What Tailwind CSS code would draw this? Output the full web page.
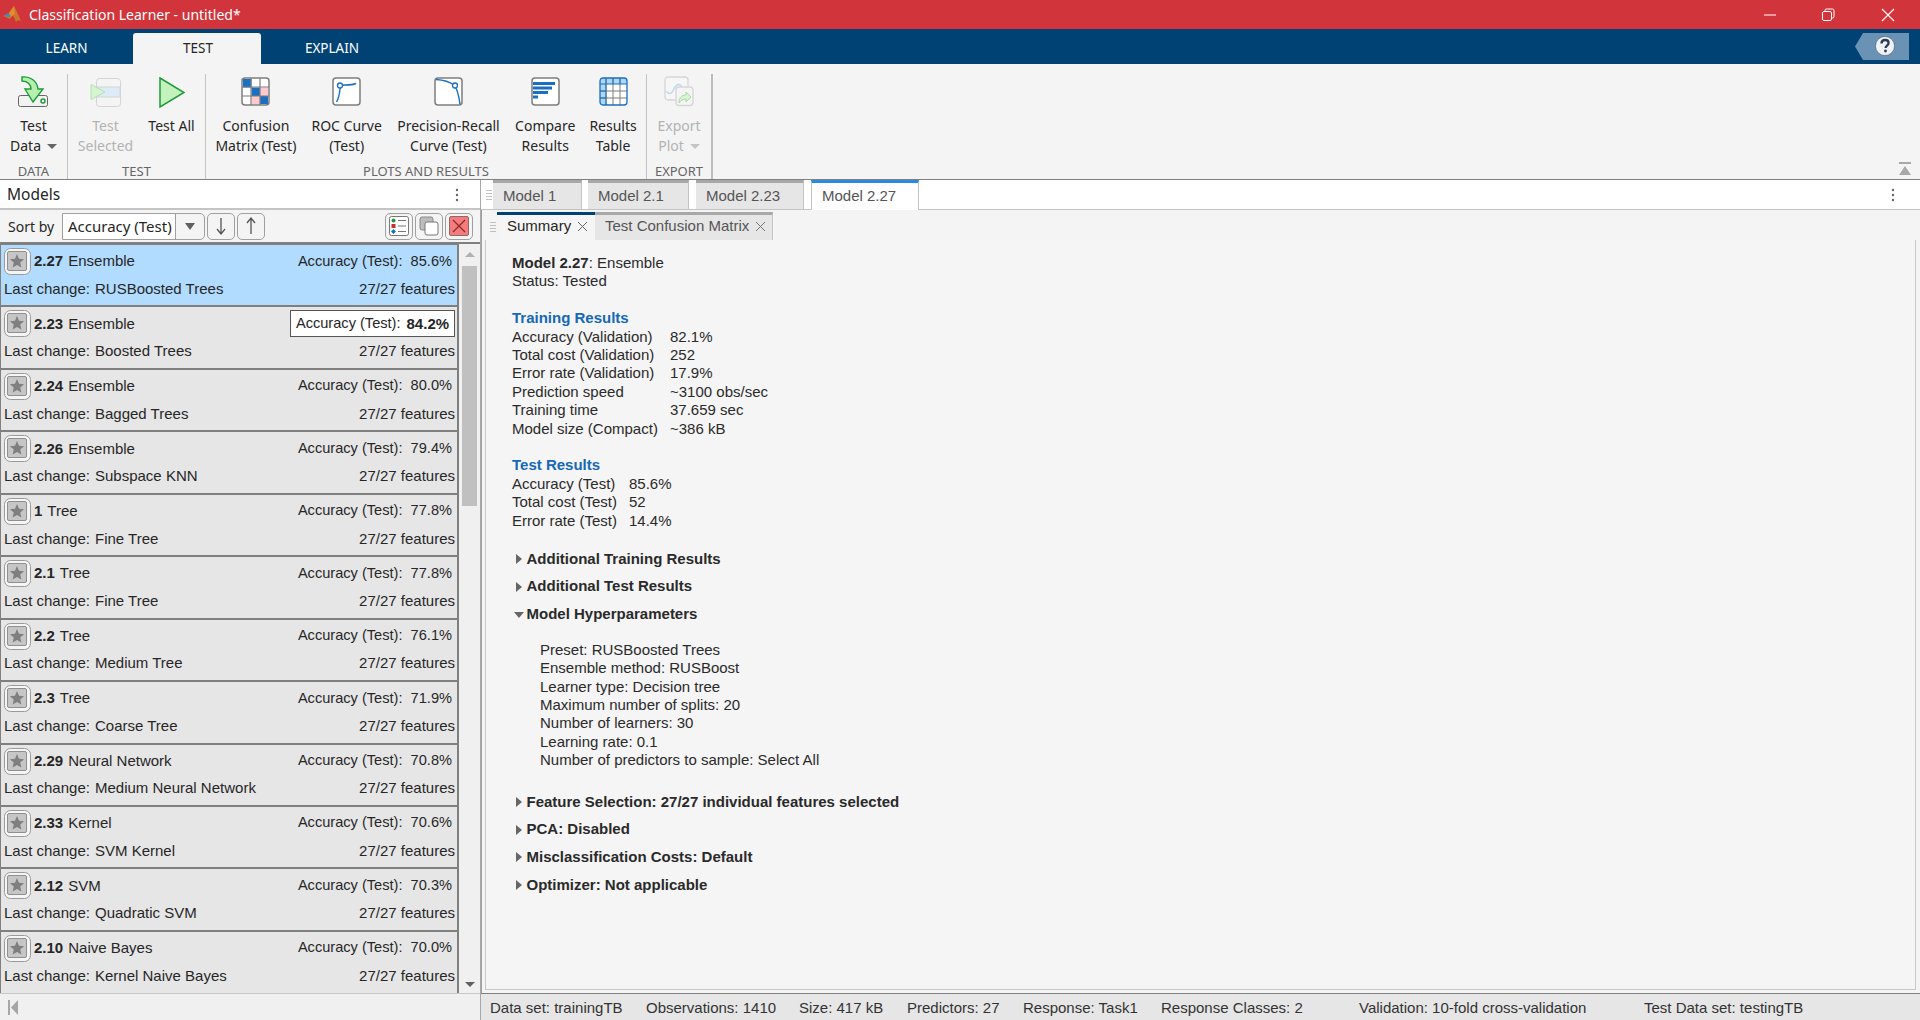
<!DOCTYPE html>
<html><head><meta charset="utf-8"><title>Classification Learner</title>
<script src="https://cdn.jsdelivr.net/npm/@tailwindcss/browser@4"></script></head>
<body class="m-0 h-[1020px] w-[1920px] overflow-hidden bg-[#f4f4f4] font-['Liberation_Sans',sans-serif] text-[#262626]">
<svg class="hidden"><defs><symbol id="star" viewBox="0 0 27 27">
<rect x="0.5" y="0.5" width="26" height="26" rx="6" fill="#f5f5f5" stroke="#9a9a9a"/><rect x="3.5" y="3.5" width="19" height="19" rx="1.5" fill="#c6c6c6" stroke="#8f8f8f"/><path d="M13 6l2 4.800 5.100.4-3.900 3.400 1.200 5-4.400-2.700-4.400 2.700 1.200-5-3.900-3.400 5.100-.4z" fill="#7f7f7f"/></symbol></defs></svg>

<div class="h-[29px] bg-[#d1343b] flex items-center font-['Noto_Sans',sans-serif] text-white text-[14px] relative">
 <svg class="ml-[3px] w-[20px] h-[20px]" viewBox="0 0 20 20"><path d="M0 11l6-3 5-7 3 6 4 9-3-1-2 2-3-7-3 4z" fill="#c9772a"/><path d="M0 11l6-3 2 3-2 1z" fill="#4a86b8"/><path d="M6 8l5-7 1 8-4 3z" fill="#e58a2e"/></svg>
 <span class="ml-[6px]">Classification Learner - untitled*</span>
 <div class="ml-auto flex items-center">
  <svg class="w-[14px] h-[14px] mr-[44px]" viewBox="0 0 14 14"><path d="M1 7h12" stroke="#fff"/></svg>
  <svg class="w-[14px] h-[14px] mr-[46px]" viewBox="0 0 14 14" fill="none" stroke="#fff"><rect x="1.5" y="3.5" width="9" height="9" rx="1.5"/><path d="M4 3V2.5a1.5 1.5 0 011.5-1.5h6A1.5 1.5 0 0113 2.5v6a1.5 1.5 0 01-1.5 1.5H11"/></svg>
  <svg class="w-[14px] h-[14px] mr-[25px]" viewBox="0 0 14 14"><path d="M1 1l12 12M13 1L1 13" stroke="#fff" stroke-width="1.1"/></svg>
 </div>
</div>

<div class="h-[35px] bg-[#004274] flex items-end relative font-['Noto_Sans',sans-serif] text-[13.5px] text-white">
 <div class="w-[133px] h-[31px] flex items-center justify-center">LEARN</div>
 <div class="w-[128px] h-[31px] flex items-center justify-center bg-[#f4f4f4] text-[#262626] rounded-t-[3px] pl-[2px]">TEST</div>
 <div class="w-[140px] h-[31px] flex items-center justify-center pl-[2px]">EXPLAIN</div>
 <svg class="absolute left-[1855px] top-[4px] w-[54px] h-[27px]" viewBox="0 0 54 27"><path d="M0 13.5L8 0h46v27H8z" fill="#6a92b5"/><circle cx="30" cy="13" r="9.5" fill="#eef1f5"/><circle cx="30" cy="13" r="9.5" fill="none" stroke="#2f3f55" stroke-opacity=".45"/><path d="M26.5 10.5c0-2.200 1.500-3.500 3.600-3.500s3.500 1.200 3.500 3c0 2.700-3 2.500-3 5" fill="none" stroke="#2b3a55" stroke-width="2.300"/><circle cx="30.500" cy="18" r="1.400" fill="#2b3a55"/></svg>
</div>

<div class="h-[115px] bg-[#f4f4f4] flex relative font-['Noto_Sans',sans-serif] text-[14px] leading-[20px] pt-[10px]">
 <div class="w-[68px] shrink-0 border-r border-[#c4c4c4] flex flex-col items-center">
  <svg class="w-[34px] h-[36px]" viewBox="0 0 34 36"><rect x="1.500" y="21.500" width="29" height="11" rx="2" fill="#f2f2f2" stroke="#666"/><circle cx="26" cy="27" r="2" fill="#fff" stroke="#1f9a3a" stroke-width="1.500"/><path d="M5 3C12 2 20 6 21 15h5L16 28 8 15h6C14 11 11 7 5 7z" fill="#b6f0ae" stroke="#1f9a3a" stroke-width="1.400"/></svg>
  <div class="mt-[6px] text-center">Test</div>
  <div class="flex items-center gap-[6px]">Data <span class="w-0 h-0 border-l-[5px] border-r-[5px] border-t-[5px] border-l-transparent border-r-transparent border-t-[#666]"></span></div>
  <div class="mt-auto h-[16px] text-[13px] leading-[16px] text-[#666]">DATA</div>
 </div>
 <div class="w-[138px] shrink-0 border-r border-[#c4c4c4] flex flex-col">
  <div class="flex flex-1">
   <div class="w-[75px] flex flex-col items-center text-[#b3b3b3]">
    <svg class="mt-[3px] w-[32px] h-[31px]" viewBox="0 0 32 31"><rect x="6.500" y="1.500" width="24" height="28" rx="3" fill="#f4f4f4" stroke="#d4d4d4"/><rect x="7" y="10" width="23" height="10" fill="#dcebf7" stroke="#d4d4d4"/><path d="M1 7.500L15 15 1 22.500z" fill="#d6f4d2" stroke="#b5e2b0"/></svg>
    <div class="mt-[8px]">Test</div><div>Selected</div>
   </div>
   <div class="w-[57px] flex flex-col items-center">
    <svg class="mt-[3px] w-[26px] h-[31px]" viewBox="0 0 26 31"><path d="M1 1l24 14.500L1 30z" fill="#c4f2bd" stroke="#1f9a3a" stroke-width="1.500"/></svg>
    <div class="mt-[8px] whitespace-nowrap">Test All</div>
   </div>
  </div>
  <div class="h-[16px] text-center text-[13px] leading-[16px] text-[#666]">TEST</div>
 </div>
 <div class="w-[441px] shrink-0 border-r border-[#c4c4c4] flex flex-col">
  <div class="flex flex-1 text-center">
   <div class="w-[100px] flex flex-col items-center">
    <svg class="mt-[3px] w-[29px] h-[29px]" viewBox="0 0 29 29"><rect x="1" y="1" width="27" height="27" rx="3" fill="#fff"/><path d="M2 2h8.500v8.500H2zM10.500 10.500h8.500V19h-8.500zM19 19h8v8h-8z" fill="#1a6fc0"/><path d="M19 10.500h8V19h-8zM10.500 19H19v8h-8.500z" fill="#fcc9cc"/><path d="M10 1v27M19 1v27M1 10h27M1 19h27" stroke="#7d7d7d" stroke-width="1.200"/><rect x="1" y="1" width="27" height="27" rx="3" fill="none" stroke="#7d7d7d" stroke-width="1.500"/></svg>
    <div class="mt-[10px]">Confusion</div><div class="whitespace-nowrap">Matrix (Test)</div>
   </div>
   <div class="ml-[1px] w-[80px] flex flex-col items-center">
    <svg class="mt-[3px] w-[29px] h-[29px]" viewBox="0 0 29 29"><rect x="1" y="1" width="27" height="27" rx="3" fill="#fff" stroke="#7d7d7d" stroke-width="1.500"/><path d="M4.500 25c2.500-4 3-8 3.500-13 .3-2 2-4 5-4s8 0 11-1.500" fill="none" stroke="#1a6fc0" stroke-width="1.400"/><circle cx="8" cy="8.500" r="2.500" fill="#fff" stroke="#1a6fc0" stroke-width="1.300"/></svg>
    <div class="mt-[10px] whitespace-nowrap">ROC Curve</div><div>(Test)</div>
   </div>
   <div class="w-[124px] flex flex-col items-center">
    <svg class="mt-[3px] w-[29px] h-[29px]" viewBox="0 0 29 29"><rect x="1" y="1" width="27" height="27" rx="3" fill="#fff" stroke="#7d7d7d" stroke-width="1.500"/><path d="M2 2.500C10 3 16 5 20 8c3 3 5 12 6 19" fill="none" stroke="#1a6fc0" stroke-width="1.400"/><circle cx="21" cy="8.500" r="2.500" fill="#fff" stroke="#1a6fc0" stroke-width="1.300"/></svg>
    <div class="mt-[10px] whitespace-nowrap">Precision-Recall</div><div class="whitespace-nowrap">Curve (Test)</div>
   </div>
   <div class="w-[70px] flex flex-col items-center">
    <svg class="mt-[3px] w-[29px] h-[29px]" viewBox="0 0 29 29"><rect x="1" y="1" width="27" height="27" rx="3" fill="#fff" stroke="#7d7d7d" stroke-width="1.500"/><path d="M2 5h22v3H2zM2 9.500h19v3H2zM2 14h15v3H2zM2 18.500h5v3H2z" fill="#1a6fc0"/></svg>
    <div class="mt-[10px]">Compare</div><div>Results</div>
   </div>
   <div class="w-[66px] flex flex-col items-center">
    <svg class="mt-[3px] w-[29px] h-[29px]" viewBox="0 0 29 29"><rect x="1" y="1" width="27" height="27" rx="3" fill="#fff"/><path d="M1 1h27v6H1zM1 7h6v21H1z" fill="#aed6f7"/><path d="M7 1v27M14 1v27M21 1v27M1 14h27M1 21h27" stroke="#7d7d7d"/><path d="M7 1v27M14 1v6M21 1v6M1 7h27M1 14h6M1 21h6" stroke="#1a6fc0"/><rect x="1" y="1" width="27" height="27" rx="3" fill="none" stroke="#1a6fc0" stroke-width="1.300"/></svg>
    <div class="mt-[10px]">Results</div><div>Table</div>
   </div>
  </div>
  <div class="h-[16px] text-center text-[13px] leading-[16px] text-[#666]">PLOTS AND RESULTS</div>
 </div>
 <div class="w-[66px] shrink-0 border-r-2 border-[#bcbcbc] flex flex-col items-center">
  <svg class="mt-[2px] w-[30px] h-[31px]" viewBox="0 0 30 31"><rect x="1" y="1" width="23" height="23" rx="3" fill="#f6f6f6" stroke="#d6d6d6" stroke-width="1.300"/><path d="M2 15c3 4 6 3 8-2s6-6 8-2" fill="none" stroke="#bcd7ef" stroke-width="1.300"/><rect x="12" y="11" width="17" height="18.500" rx="3" fill="#f4f4f4" stroke="#d6d6d6" stroke-width="1.300"/><path d="M15 27c0-5 2-8 7-8v-3l5 5-5 5v-3c-3 0-5 1-7 4z" fill="#d9f3d4" stroke="#a9dca2"/></svg>
  <div class="mt-[9px] text-[#b3b3b3]">Export</div>
  <div class="flex items-center gap-[6px] text-[#b3b3b3]">Plot <span class="w-0 h-0 border-l-[5px] border-r-[5px] border-t-[5px] border-l-transparent border-r-transparent border-t-[#c4c4c4]"></span></div>
  <div class="mt-auto h-[16px] text-[13px] leading-[16px] text-[#666]">EXPORT</div>
 </div>
 <svg class="absolute left-[1898px] top-[98px] w-[14px] h-[14px]" viewBox="0 0 14 14"><path d="M1 1h12" stroke="#a8a8a8" stroke-width="2"/><path d="M7 4l6 9H1z" fill="#a8a8a8"/></svg>
</div>

<div class="h-[841px] flex border-t border-[#808080]">
 <div class="w-[481px] shrink-0 border-r border-[#a8a8a8] flex flex-col">
  <div class="h-[30px] shrink-0 bg-white flex items-center justify-between border-b-[2px] border-[#c4c4c4] pl-[7px] pr-[8px] pt-[1px] text-[15.500px] font-['Noto_Sans',sans-serif]">
   <span>Models</span>
   <svg class="w-[4px] h-[14px] mr-[13px]" viewBox="0 0 4 14" fill="#666"><circle cx="2" cy="2" r="1.200"/><circle cx="2" cy="7" r="1.200"/><circle cx="2" cy="12" r="1.200"/></svg>
  </div>
  <div class="h-[34px] shrink-0 bg-[#f4f4f4] flex items-center border-b-2 border-[#808080] text-[15px] pl-[8px]">
   <span class="w-[54px] font-['Noto_Sans',sans-serif] text-[14px]">Sort by</span>
   <div class="w-[143px] h-[27px] flex border border-[#a0a0a0] rounded-r-[5px]">
    <div class="w-[113px] bg-white flex items-center pl-[5px] whitespace-nowrap border-r border-[#a0a0a0] font-['Noto_Sans',sans-serif] text-[15px]">Accuracy (Test)</div>
    <div class="flex-1 flex items-center justify-center"><span class="w-0 h-0 border-l-[5px] border-r-[5px] border-t-[7px] border-l-transparent border-r-transparent border-t-[#606060]"></span></div>
   </div>
   <div class="ml-[2px] w-[28px] h-[27px] border border-[#a0a0a0] rounded-[5px] flex items-center justify-center"><svg class="w-[12px] h-[18px]" viewBox="0 0 12 18" fill="none" stroke="#555" stroke-width="1.300"><path d="M6 1v15M2 12l4 5 4-5"/></svg></div>
   <div class="ml-[2px] w-[28px] h-[27px] border border-[#a0a0a0] rounded-[5px] flex items-center justify-center"><svg class="w-[12px] h-[18px]" viewBox="0 0 12 18" fill="none" stroke="#555" stroke-width="1.300"><path d="M6 17V2M2 6l4-5 4 5"/></svg></div>
   <div class="ml-[120px] w-[28px] h-[27px] border border-[#a0a0a0] rounded-[5px] flex items-center justify-center"><svg class="w-[20px] h-[20px]" viewBox="0 0 20 20"><rect x=".5" y=".5" width="19" height="19" rx="2" fill="#fff" stroke="#777"/><path d="M9 4.500h8M9 10h8M9 15.500h8" stroke="#777"/><circle cx="4.500" cy="4.500" r="2" fill="#1f9a3a"/><rect x="2.500" y="8" width="4" height="4" fill="#c8302f"/><path d="M4.500 13l2.500 2.500L4.500 18 2 15.500z" fill="#1a6fc0"/></svg></div>
   <div class="ml-[2px] w-[28px] h-[27px] border border-[#a0a0a0] rounded-[5px] flex items-center justify-center"><svg class="w-[20px] h-[20px]" viewBox="0 0 20 20"><rect x="1" y="1" width="13" height="13" rx="2" fill="#bdbdbd" stroke="#8a8a8a"/><rect x="6" y="6" width="13" height="13" rx="2" fill="#fff" stroke="#777"/></svg></div>
   <div class="ml-[2px] w-[28px] h-[27px] border border-[#a0a0a0] rounded-[5px] flex items-center justify-center"><svg class="w-[20px] h-[20px]" viewBox="0 0 20 20"><rect x=".5" y=".5" width="19" height="19" rx="1.500" fill="#f47c7c" stroke="#8a6a6a"/><path d="M4 4l12 12M16 4L4 16" stroke="#8c2a2a" stroke-width="1.200"/></svg></div>
  </div>
  <div class="flex-1 min-h-0 flex">
   <div class="w-[459px] shrink-0 overflow-hidden border-l border-r-2 border-[#808080] pt-[1px] bg-[#808080] text-[15px]">

    <div class="h-[62.45px] box-border border-b-2 border-[#7f7f7f] bg-[#b1dcff] pt-[3px]"><div class="flex items-center h-[27px] pl-[3px] pr-[5px]"><svg class="w-[27px] h-[27px] mr-[3px]"><use href="#star"/></svg><b>2.27</b><span class="ml-[5px]">Ensemble</span><span class="ml-auto text-[14.600px]">Accuracy (Test):&nbsp; 85.6%</span></div><div class="flex justify-between pl-[3px] pr-[2px] mt-[4px] h-[20px] items-center"><span><span class="inline-block w-[91px]">Last change:</span>RUSBoosted Trees</span><span>27/27 features</span></div></div>

    <div class="h-[62.45px] box-border border-b-2 border-[#7f7f7f] bg-[#e6e6e6] pt-[3px]"><div class="flex items-center h-[27px] pl-[3px] pr-[2px]"><svg class="w-[27px] h-[27px] mr-[3px]"><use href="#star"/></svg><b>2.23</b><span class="ml-[5px]">Ensemble</span><span class="ml-auto w-[165px] h-[27px] bg-white border border-[#555] flex items-center justify-center text-[14.600px]">Accuracy (Test):<b class="ml-[6px] text-[15px]">84.2%</b></span></div><div class="flex justify-between pl-[3px] pr-[2px] mt-[4px] h-[20px] items-center"><span><span class="inline-block w-[91px]">Last change:</span>Boosted Trees</span><span>27/27 features</span></div></div>

    <div class="h-[62.45px] box-border border-b-2 border-[#7f7f7f] bg-[#e6e6e6] pt-[3px]"><div class="flex items-center h-[27px] pl-[3px] pr-[5px]"><svg class="w-[27px] h-[27px] mr-[3px]"><use href="#star"/></svg><b>2.24</b><span class="ml-[5px]">Ensemble</span><span class="ml-auto text-[14.600px]">Accuracy (Test):&nbsp; 80.0%</span></div><div class="flex justify-between pl-[3px] pr-[2px] mt-[4px] h-[20px] items-center"><span><span class="inline-block w-[91px]">Last change:</span>Bagged Trees</span><span>27/27 features</span></div></div>

    <div class="h-[62.45px] box-border border-b-2 border-[#7f7f7f] bg-[#e6e6e6] pt-[3px]"><div class="flex items-center h-[27px] pl-[3px] pr-[5px]"><svg class="w-[27px] h-[27px] mr-[3px]"><use href="#star"/></svg><b>2.26</b><span class="ml-[5px]">Ensemble</span><span class="ml-auto text-[14.600px]">Accuracy (Test):&nbsp; 79.4%</span></div><div class="flex justify-between pl-[3px] pr-[2px] mt-[4px] h-[20px] items-center"><span><span class="inline-block w-[91px]">Last change:</span>Subspace KNN</span><span>27/27 features</span></div></div>

    <div class="h-[62.45px] box-border border-b-2 border-[#7f7f7f] bg-[#e6e6e6] pt-[3px]"><div class="flex items-center h-[27px] pl-[3px] pr-[5px]"><svg class="w-[27px] h-[27px] mr-[3px]"><use href="#star"/></svg><b>1</b><span class="ml-[5px]">Tree</span><span class="ml-auto text-[14.600px]">Accuracy (Test):&nbsp; 77.8%</span></div><div class="flex justify-between pl-[3px] pr-[2px] mt-[4px] h-[20px] items-center"><span><span class="inline-block w-[91px]">Last change:</span>Fine Tree</span><span>27/27 features</span></div></div>

    <div class="h-[62.45px] box-border border-b-2 border-[#7f7f7f] bg-[#e6e6e6] pt-[3px]"><div class="flex items-center h-[27px] pl-[3px] pr-[5px]"><svg class="w-[27px] h-[27px] mr-[3px]"><use href="#star"/></svg><b>2.1</b><span class="ml-[5px]">Tree</span><span class="ml-auto text-[14.600px]">Accuracy (Test):&nbsp; 77.8%</span></div><div class="flex justify-between pl-[3px] pr-[2px] mt-[4px] h-[20px] items-center"><span><span class="inline-block w-[91px]">Last change:</span>Fine Tree</span><span>27/27 features</span></div></div>

    <div class="h-[62.45px] box-border border-b-2 border-[#7f7f7f] bg-[#e6e6e6] pt-[3px]"><div class="flex items-center h-[27px] pl-[3px] pr-[5px]"><svg class="w-[27px] h-[27px] mr-[3px]"><use href="#star"/></svg><b>2.2</b><span class="ml-[5px]">Tree</span><span class="ml-auto text-[14.600px]">Accuracy (Test):&nbsp; 76.1%</span></div><div class="flex justify-between pl-[3px] pr-[2px] mt-[4px] h-[20px] items-center"><span><span class="inline-block w-[91px]">Last change:</span>Medium Tree</span><span>27/27 features</span></div></div>

    <div class="h-[62.45px] box-border border-b-2 border-[#7f7f7f] bg-[#e6e6e6] pt-[3px]"><div class="flex items-center h-[27px] pl-[3px] pr-[5px]"><svg class="w-[27px] h-[27px] mr-[3px]"><use href="#star"/></svg><b>2.3</b><span class="ml-[5px]">Tree</span><span class="ml-auto text-[14.600px]">Accuracy (Test):&nbsp; 71.9%</span></div><div class="flex justify-between pl-[3px] pr-[2px] mt-[4px] h-[20px] items-center"><span><span class="inline-block w-[91px]">Last change:</span>Coarse Tree</span><span>27/27 features</span></div></div>

    <div class="h-[62.45px] box-border border-b-2 border-[#7f7f7f] bg-[#e6e6e6] pt-[3px]"><div class="flex items-center h-[27px] pl-[3px] pr-[5px]"><svg class="w-[27px] h-[27px] mr-[3px]"><use href="#star"/></svg><b>2.29</b><span class="ml-[5px]">Neural Network</span><span class="ml-auto text-[14.600px]">Accuracy (Test):&nbsp; 70.8%</span></div><div class="flex justify-between pl-[3px] pr-[2px] mt-[4px] h-[20px] items-center"><span><span class="inline-block w-[91px]">Last change:</span>Medium Neural Network</span><span>27/27 features</span></div></div>

    <div class="h-[62.45px] box-border border-b-2 border-[#7f7f7f] bg-[#e6e6e6] pt-[3px]"><div class="flex items-center h-[27px] pl-[3px] pr-[5px]"><svg class="w-[27px] h-[27px] mr-[3px]"><use href="#star"/></svg><b>2.33</b><span class="ml-[5px]">Kernel</span><span class="ml-auto text-[14.600px]">Accuracy (Test):&nbsp; 70.6%</span></div><div class="flex justify-between pl-[3px] pr-[2px] mt-[4px] h-[20px] items-center"><span><span class="inline-block w-[91px]">Last change:</span>SVM Kernel</span><span>27/27 features</span></div></div>

    <div class="h-[62.45px] box-border border-b-2 border-[#7f7f7f] bg-[#e6e6e6] pt-[3px]"><div class="flex items-center h-[27px] pl-[3px] pr-[5px]"><svg class="w-[27px] h-[27px] mr-[3px]"><use href="#star"/></svg><b>2.12</b><span class="ml-[5px]">SVM</span><span class="ml-auto text-[14.600px]">Accuracy (Test):&nbsp; 70.3%</span></div><div class="flex justify-between pl-[3px] pr-[2px] mt-[4px] h-[20px] items-center"><span><span class="inline-block w-[91px]">Last change:</span>Quadratic SVM</span><span>27/27 features</span></div></div>

    <div class="h-[62.45px] box-border bg-[#e6e6e6] pt-[3px]"><div class="flex items-center h-[27px] pl-[3px] pr-[5px]"><svg class="w-[27px] h-[27px] mr-[3px]"><use href="#star"/></svg><b>2.10</b><span class="ml-[5px]">Naive Bayes</span><span class="ml-auto text-[14.600px]">Accuracy (Test):&nbsp; 70.0%</span></div><div class="flex justify-between pl-[3px] pr-[2px] mt-[4px] h-[20px] items-center"><span><span class="inline-block w-[91px]">Last change:</span>Kernel Naive Bayes</span><span>27/27 features</span></div></div>
   </div>
   <div class="flex-1 bg-[#f0f0f0] flex flex-col items-center pt-[8px] pb-[6px]">
    <span class="w-0 h-0 border-l-[5px] border-r-[5px] border-b-[5px] border-l-transparent border-r-transparent border-b-[#b0b0b0]"></span>
    <div class="w-[15px] h-[240px] mt-[9px] bg-[#c0c0c0]"></div>
    <span class="mt-auto w-0 h-0 border-l-[5px] border-r-[5px] border-t-[5px] border-l-transparent border-r-transparent border-t-[#606060]"></span>
   </div>
  </div>
  <div class="h-[27px] shrink-0 border-t border-[#c8c8c8] bg-[#f0f0f0] flex items-center pl-[8px] pt-[1px]">
   <svg class="w-[10px] h-[15px]" viewBox="0 0 10 15" fill="#a6a6a6"><rect width="2" height="15"/><path d="M10 0v15L3 7.500z"/></svg>
  </div>
 </div>

 <div class="flex-1 min-w-0 flex flex-col bg-white">
  <div class="h-[30px] shrink-0 flex items-stretch border-b border-[#c4c4c4] relative text-[15px] text-[#555]">
   <svg class="ml-[5px] mr-[1px] w-[6px] h-[12px] self-center" viewBox="0 0 6 12" fill="#c0c0c0"><path d="M0 1h6v1H0zM0 4h6v1H0zM0 7h6v1H0zM0 10h6v1H0z"/></svg>
   <div class="w-[89px] bg-[#e6e6e6] border-t-[3px] border-[#a8a8a8] border-r border-r-[#c4c4c4] pl-[10px] flex items-center">Model 1</div>
   <div class="ml-[6px] w-[101px] bg-[#e6e6e6] border-t-[3px] border-[#a8a8a8] border-r border-r-[#c4c4c4] pl-[10px] flex items-center">Model 2.1</div>
   <div class="ml-[7px] w-[108px] bg-[#e6e6e6] border-t-[3px] border-[#a8a8a8] border-r border-r-[#c4c4c4] pl-[10px] flex items-center">Model 2.23</div>
   <div class="ml-[7px] w-[108px] bg-white border-t-[3px] border-[#2a8ae0] border-l border-r border-l-[#c4c4c4] border-r-[#c4c4c4] pl-[10px] flex items-center -mb-px">Model 2.27</div>
   <svg class="ml-auto mr-[25px] w-[4px] h-[14px] self-center" viewBox="0 0 4 14" fill="#666"><circle cx="2" cy="2" r="1.200"/><circle cx="2" cy="7" r="1.200"/><circle cx="2" cy="12" r="1.200"/></svg>
  </div>
  <div class="h-[30px] shrink-0 flex items-end bg-[#f4f4f4] border-l border-[#a0a0a0] text-[15px]">
   <svg class="ml-[8px] mr-[1px] mb-[7px] w-[6px] h-[12px]" viewBox="0 0 6 12" fill="#c0c0c0"><path d="M0 1h6v1H0zM0 4h6v1H0zM0 7h6v1H0zM0 10h6v1H0z"/></svg>
   <div class="w-[98px] h-[28px] bg-[#f5f5f5] border-t-[3px] border-[#004274] flex items-center pl-[10px] pb-[3px] gap-[6px] whitespace-nowrap">Summary <svg class="w-[11px] h-[11px]" viewBox="0 0 11 11"><path d="M1 1l9 9M10 1l-9 9" stroke="#666"/></svg></div>
   <div class="w-[178px] h-[28px] bg-[#e6e6e6] border-t-[3px] border-[#a8a8a8] border-r border-r-[#c4c4c4] flex items-center pl-[10px] pb-[3px] gap-[6px] whitespace-nowrap text-[#555]">Test Confusion Matrix <svg class="w-[11px] h-[11px]" viewBox="0 0 11 11"><path d="M1 1l9 9M10 1l-9 9" stroke="#777"/></svg></div>
  </div>
  <div class="flex-1 min-h-0 bg-[#f4f4f4] pl-[3px] pr-[4px] pb-[3px] border-l border-[#a0a0a0]">
   <div class="h-full bg-[#f5f5f5] border border-[#c8c8c8] border-t-0 pl-[26px] pt-[13.500px] text-[15px] leading-[18.4px] text-[#2a2a2a]">
    <div><b>Model 2.27</b>: Ensemble</div>
    <div>Status: Tested</div>
    <div class="mt-[18.9px] font-bold text-[#1668b8]">Training Results</div>
    <div class="flex"><span class="w-[158px]">Accuracy (Validation)</span><span>82.1%</span></div>
    <div class="flex"><span class="w-[158px]">Total cost (Validation)</span><span>252</span></div>
    <div class="flex"><span class="w-[158px]">Error rate (Validation)</span><span>17.9%</span></div>
    <div class="flex"><span class="w-[158px]">Prediction speed</span><span>~3100 obs/sec</span></div>
    <div class="flex"><span class="w-[158px]">Training time</span><span>37.659 sec</span></div>
    <div class="flex"><span class="w-[158px]">Model size (Compact)</span><span>~386 kB</span></div>
    <div class="mt-[18.4px] font-bold text-[#1668b8]">Test Results</div>
    <div class="flex"><span class="w-[117px]">Accuracy (Test)</span><span>85.6%</span></div>
    <div class="flex"><span class="w-[117px]">Total cost (Test)</span><span>52</span></div>
    <div class="flex"><span class="w-[117px]">Error rate (Test)</span><span>14.4%</span></div>
    <div class="mt-[20px] ml-[4px] flex items-center h-[18.4px] font-bold"><span class="w-[6px] mr-[4.500px] h-0 border-l-[6px] border-t-[5px] border-b-[5px] border-t-transparent border-b-transparent border-l-[#666]"></span>Additional Training Results</div>
    <div class="mt-[9px] ml-[4px] flex items-center h-[18.4px] font-bold"><span class="w-[6px] mr-[4.500px] h-0 border-l-[6px] border-t-[5px] border-b-[5px] border-t-transparent border-b-transparent border-l-[#666]"></span>Additional Test Results</div>
    <div class="mt-[9.500px] ml-[2px] flex items-center h-[18.4px] font-bold"><span class="w-[10px] mr-[2.500px] h-0 border-t-[6px] border-l-[5px] border-r-[5px] border-l-transparent border-r-transparent border-t-[#666]"></span>Model Hyperparameters</div>
    <div class="mt-[17px] pl-[28px]">
     <div>Preset: RUSBoosted Trees</div>
     <div>Ensemble method: RUSBoost</div>
     <div>Learner type: Decision tree</div>
     <div>Maximum number of splits: 20</div>
     <div>Number of learners: 30</div>
     <div>Learning rate: 0.1</div>
     <div>Number of predictors to sample: Select All</div>
    </div>
    <div class="mt-[23px] ml-[4px] flex items-center h-[18.4px] font-bold"><span class="w-[6px] mr-[4.500px] h-0 border-l-[6px] border-t-[5px] border-b-[5px] border-t-transparent border-b-transparent border-l-[#666]"></span>Feature Selection: 27/27 individual features selected</div>
    <div class="mt-[9.500px] ml-[4px] flex items-center h-[18.4px] font-bold"><span class="w-[6px] mr-[4.500px] h-0 border-l-[6px] border-t-[5px] border-b-[5px] border-t-transparent border-b-transparent border-l-[#666]"></span>PCA: Disabled</div>
    <div class="mt-[9px] ml-[4px] flex items-center h-[18.4px] font-bold"><span class="w-[6px] mr-[4.500px] h-0 border-l-[6px] border-t-[5px] border-b-[5px] border-t-transparent border-b-transparent border-l-[#666]"></span>Misclassification Costs: Default</div>
    <div class="mt-[9.500px] ml-[4px] flex items-center h-[18.4px] font-bold"><span class="w-[6px] mr-[4.500px] h-0 border-l-[6px] border-t-[5px] border-b-[5px] border-t-transparent border-b-transparent border-l-[#666]"></span>Optimizer: Not applicable</div>
   </div>
  </div>
  <div class="h-[27px] shrink-0 bg-[#e6e6e6] border-t border-[#808080] flex items-center pl-[9px] pt-[2px] text-[15px] text-[#333]">
   <span class="w-[156px]">Data set: trainingTB</span>
   <span class="w-[153px]">Observations: 1410</span>
   <span class="w-[108px]">Size: 417 kB</span>
   <span class="w-[116px]">Predictors: 27</span>
   <span class="w-[138px]">Response: Task1</span>
   <span class="w-[198px]">Response Classes: 2</span>
   <span class="w-[285px]">Validation: 10-fold cross-validation</span>
   <span>Test Data set: testingTB</span>
  </div>
 </div>
</div>
</body></html>
